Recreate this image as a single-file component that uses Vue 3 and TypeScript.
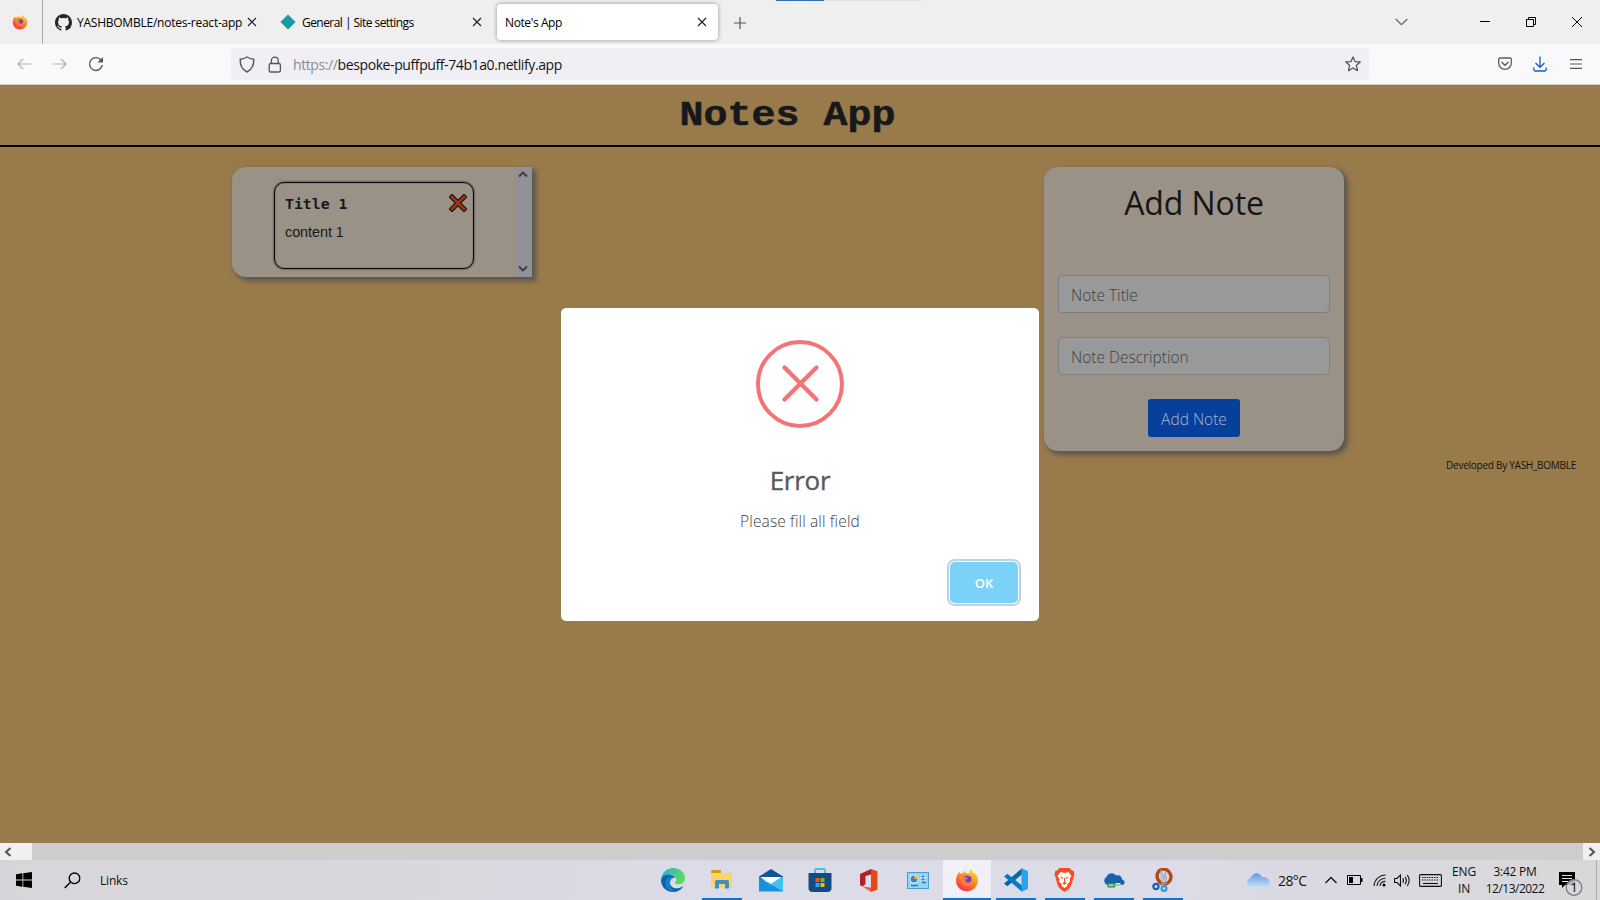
<script setup lang="ts">
interface TaskApp {
  name: string
  open: boolean
  active?: boolean
}

const apps: TaskApp[] = [
  { name: 'edge', open: false },
  { name: 'files', open: true },
  { name: 'mail', open: false },
  { name: 'store', open: false },
  { name: 'office', open: false },
  { name: 'panel', open: false },
  { name: 'firefox', open: true, active: true },
  { name: 'code', open: true },
  { name: 'brave', open: true },
  { name: 'cloud', open: true },
  { name: 'snip', open: true },
]

const notes = [{ title: 'Title 1', content: 'content 1' }]
</script>

<template>
  <div class="screen">
    <svg class="defs" width="0" height="0">
      <defs>
        <linearGradient id="ffA" x1="0.8" y1="0" x2="0.2" y2="1">
          <stop offset="0" stop-color="#ffe83d" />
          <stop offset="0.45" stop-color="#ff8a1f" />
          <stop offset="1" stop-color="#f5274f" />
        </linearGradient>
        <linearGradient id="edgeA" x1="0" y1="0" x2="1" y2="0.3">
          <stop offset="0" stop-color="#2aa7e0" />
          <stop offset="1" stop-color="#5bdc5f" />
        </linearGradient>
        <linearGradient id="cloudA" x1="0" y1="0" x2="0" y2="1">
          <stop offset="0" stop-color="#5f9be8" />
          <stop offset="1" stop-color="#c9dff8" />
        </linearGradient>
        <symbol id="firefox" viewBox="0 0 24 24">
          <path d="M3.2 5.5C3.6 4.8 4 4.300 4.600 3.800 4.700 4.800 5 5.300 5.400 5.700 6.300 5.200 7 5.100 8 5.200 8.500 4.200 9.300 3.400 10.500 3 10.300 4 10.600 4.600 11.300 5.200L14.500 5C14.300 3.400 14.800 2 16 .8 16.500 3.400 18.300 4.300 19.600 6.100 19.600 5.500 19.500 5 19.300 4.500 21.800 6.500 23.200 9.500 23 12.800 22.700 19 17.900 23.200 12 23.200 5.800 23.200 1 18.600 1 12.500 1 9.900 1.700 7.400 3.200 5.500Z" fill="url(#ffA)" />
          <path d="M7.500 12C7.500 9 9.600 7.300 12.300 7.500 15.500 7.700 17.200 9.900 17 12.500 16.800 15.300 14.800 16.900 12.200 16.900 9.500 16.900 7.500 14.900 7.500 12Z" fill="#8a45d8" />
          <path d="M4.500 8.500C7 7.500 9 8.300 9.800 9.300L12.700 9.600C12.500 11 11 11 10.600 11.500 10.600 13 11.800 13.900 13.400 13.500 15.800 13 15.400 10.400 14 9.200 17 10 18 12.400 17.300 14.800 16.400 18 13 19 10 17.800 6.500 16.400 5 12.500 4.500 8.500Z" fill="#ff8a2a" opacity=".8" />
          <path d="M12.500 8.200C15.500 8.500 16.600 10.500 16 12.500 15 15 11.500 15 10.300 12.500 12 13 13.500 12 12.500 8.200Z" fill="#6a3cc8" />
        </symbol>
        <symbol id="close" viewBox="0 0 10 10">
          <path d="M1 1 9 9M9 1 1 9" fill="none" stroke="#222" stroke-width="1.200" />
        </symbol>
      </defs>
    </svg>

    <header class="tabs">
      <div class="pinned"><svg width="16" height="16"><use href="#firefox" /></svg></div>
      <div class="tab tab-a">
        <svg class="fav" width="17" height="17" viewBox="0 0 16 16">
          <path fill="#24292f" fill-rule="evenodd" d="M8 0C3.580 0 0 3.580 0 8c0 3.540 2.290 6.530 5.470 7.590.4.070.55-.17.55-.38 0-.19-.01-.82-.01-1.490-2.010.37-2.530-.49-2.690-.94-.09-.23-.48-.94-.82-1.130-.28-.15-.68-.52-.01-.53.63-.01 1.080.58 1.230.82.72 1.210 1.870.87 2.330.66.070-.52.28-.87.51-1.070-1.780-.2-3.640-.89-3.640-3.950 0-.87.31-1.590.82-2.150-.08-.2-.36-1.020.08-2.120 0 0 .67-.21 2.200.82.64-.18 1.320-.27 2-.27s1.360.09 2 .27c1.530-1.040 2.200-.82 2.200-.82.44 1.100.16 1.920.08 2.120.51.56.82 1.270.82 2.150 0 3.070-1.870 3.750-3.650 3.950.29.25.54.73.54 1.480 0 1.070-.01 1.930-.01 2.200 0 .21.15.46.55.38A8.010 8.010 0 0 0 16 8c0-4.420-3.580-8-8-8Z" />
        </svg>
        <span class="t1">YASHBOMBLE/notes-react-app</span>
        <svg class="x" width="10" height="10"><use href="#close" /></svg>
      </div>
      <div class="tab tab-b">
        <svg class="fav" width="16" height="16" viewBox="0 0 16 16"><path d="M8 .4 15.600 8 8 15.600.4 8Z" fill="#159ba3" /></svg>
        <span class="t2">General | Site settings</span>
        <svg class="x" width="10" height="10"><use href="#close" /></svg>
      </div>
      <div class="tab tab-c">
        <span class="t3">Note's App</span>
        <svg class="x" width="10" height="10"><use href="#close" /></svg>
      </div>
      <svg class="plus" width="12" height="12" viewBox="0 0 12 12"><path d="M6 0V12M0 6H12" stroke="#555" stroke-width="1.200" /></svg>
      <div class="win">
        <svg width="13" height="8" viewBox="0 0 13 8"><path d="M.7 1 6.500 6.700 12.300 1" fill="none" stroke="#666" stroke-width="1.300" /></svg>
        <svg class="min" width="10" height="2"><path d="M0 .5H10" stroke="#000" /></svg>
        <svg class="max" width="10" height="10" viewBox="0 0 10 10"><path d="M.5 2.500H7.500V9.500H.5ZM2.500 2.500V.5H9.500V7.500H7.500" fill="none" stroke="#000" /></svg>
        <svg width="10" height="10" viewBox="0 0 10 10"><path d="M0 0 10 10M10 0 0 10" stroke="#000" stroke-width="1" /></svg>
      </div>
      <i class="drag-line"></i><i class="drag-mark"></i>
    </header>

    <nav class="toolbar">
      <svg class="back" width="14" height="12" viewBox="0 0 14 12"><path d="M14 6H1M6 1 1 6 6 11" fill="none" stroke="#b4b4b8" stroke-width="1.200" /></svg>
      <svg class="fwd" width="14" height="12" viewBox="0 0 14 12"><path d="M0 6H13M8 1 13 6 8 11" fill="none" stroke="#b4b4b8" stroke-width="1.200" /></svg>
      <svg class="reload" width="16" height="16" viewBox="0 0 16 16"><path d="M13.300 4.500A6.400 6.400 0 1 0 14.300 9" fill="none" stroke="#55555c" stroke-width="1.400" /><path d="M15 1V6.500H9.500Z" fill="#55555c" /></svg>
      <div class="url">
        <svg class="shield" width="16" height="17" viewBox="0 0 16 17"><path d="M8 1C10 2.300 12.500 3 14.800 3.300 15 9 13 13.500 8 16 3 13.500 1 9 1.200 3.300 3.500 3 6 2.300 8 1Z" fill="none" stroke="#55555c" stroke-width="1.400" stroke-linejoin="round" /></svg>
        <svg class="lock" width="14" height="17" viewBox="0 0 14 17"><rect x="1.200" y="7.500" width="11.200" height="8.500" rx="1.500" fill="none" stroke="#55555c" stroke-width="1.300" /><path d="M3.400 7.500V4.500a3.400 3.400 0 0 1 6.800 0v3" fill="none" stroke="#55555c" stroke-width="1.300" /></svg>
        <span class="addr"><span class="scheme">https://</span>bespoke-puffpuff-74b1a0.netlify.app</span>
        <svg class="star" width="16" height="16" viewBox="0 0 16 16"><path d="M8 1 10 5.600 15.200 6 11.300 9.400 12.500 14.700 8 12 3.500 14.700 4.700 9.400.8 6 6 5.600Z" fill="none" stroke="#55555c" stroke-width="1.300" stroke-linejoin="round" /></svg>
      </div>
      <div class="tools">
        <svg width="14" height="14" viewBox="0 0 14 14"><path d="M2 1H12a1.300 1.300 0 0 1 1.300 1.300V6A6.300 6.300 0 0 1 .7 6V2.300A1.300 1.300 0 0 1 2 1ZM3.800 5.200 7 8.300l3.200-3.100" fill="none" stroke="#5b5b62" stroke-width="1.300" stroke-linecap="round" /></svg>
        <svg class="down" width="14" height="16" viewBox="0 0 14 16"><path d="M7 .5V11M2.500 7 7 11.300 11.500 7M.8 11.500V13.500a1.500 1.500 0 0 0 1.500 1.500H11.700a1.500 1.500 0 0 0 1.500-1.500V11.500" fill="none" stroke="#0b5fd8" stroke-width="1.300" /></svg>
        <svg width="12" height="10" viewBox="0 0 12 10"><path d="M0 .7H12M0 5H12M0 9.300H12" stroke="#55555c" stroke-width="1.200" /></svg>
      </div>
    </nav>

    <main class="page">
      <h1><span>Notes App</span></h1>
      <div class="columns">
        <section class="list">
          <div class="list-body">
            <article v-for="note in notes" :key="note.title" class="note">
              <div class="note-head">
                <b>{{ note.title }}</b>
                <svg width="18" height="18" viewBox="0 0 18 18"><path d="M3 3 15 15M15 3 3 15" stroke="#1c0e0a" stroke-width="5" stroke-linecap="square" stroke-linejoin="round" /><path d="M3 3 15 15M15 3 3 15" stroke="#9c3018" stroke-width="3" stroke-linecap="square" /></svg>
              </div>
              <p>{{ note.content }}</p>
            </article>
          </div>
          <div class="vbar">
            <svg width="10" height="7" viewBox="0 0 10 7"><path d="M1 5.500 5 1.500 9 5.500" fill="none" stroke="#383a3e" stroke-width="1.800" /></svg>
            <svg width="10" height="7" viewBox="0 0 10 7"><path d="M1 1.500 5 5.500 9 1.500" fill="none" stroke="#383a3e" stroke-width="1.800" /></svg>
          </div>
        </section>
        <section class="form">
          <h2>Add Note</h2>
          <div class="field"><span class="f1">Note Title</span></div>
          <div class="field"><span class="f2">Note Description</span></div>
          <button type="button">Add Note</button>
        </section>
      </div>
      <footer><span>Developed By YASH_BOMBLE</span></footer>

      <div class="modal" role="dialog">
        <svg class="err" width="88" height="88" viewBox="0 0 88 88"><circle cx="44" cy="44" r="42" fill="none" stroke="#f27474" stroke-width="4" /><path d="M28.500 27.500 60.500 59.500M60.500 27.500 28.500 59.500" stroke="#f27474" stroke-width="4.400" stroke-linecap="round" /></svg>
        <div class="modal-title"><span>Error</span></div>
        <div class="modal-text"><span>Please fill all field</span></div>
        <div class="modal-foot"><button type="button"><span>OK</span></button></div>
      </div>
    </main>

    <div class="hbar">
      <div class="hleft"><svg width="8" height="10" viewBox="0 0 8 10"><path d="M6.500 1 2 5 6.500 9" fill="none" stroke="#505050" stroke-width="2" /></svg></div>
      <div class="hright"><svg width="8" height="10" viewBox="0 0 8 10"><path d="M1.500 1 6 5 1.500 9" fill="none" stroke="#505050" stroke-width="2" /></svg></div>
    </div>

    <div class="taskbar">
      <div class="start">
        <svg width="16" height="16" viewBox="0 0 16 16"><path d="M0 2.200 6.500 1.300V7.600H0ZM7.300 1.200 16 0V7.600H7.300ZM0 8.400H6.500V14.700L0 13.800ZM7.300 8.400H16V16L7.300 14.800Z" /></svg>
        <svg class="search" width="17" height="17" viewBox="0 0 17 17"><circle cx="10.500" cy="6.300" r="5.300" fill="none" stroke="#000" stroke-width="1.300" /><path d="M6.500 10.200.7 16" stroke="#000" stroke-width="1.500" /></svg>
        <span>Links</span>
      </div>
      <div class="apps">
        <div v-for="app in apps" :key="app.name" class="app" :class="{ open: app.open, active: app.active }">
          <svg v-if="app.name === 'edge'" width="24" height="24" viewBox="0 0 24 24"><path d="M0 12C.5 5 5.500 0 12 0c7 0 12 4.500 12 10 0 4-3 6.300-6.300 6.300-2.200 0-3.700-.8-3.700-1.600 0-.8 1.300-1.200 1.300-3.200C15.300 8.500 12.500 7 9 7 4.500 7 1 9 0 12Z" fill="url(#edgeA)" /><path d="M0 12C1 8 5 6.300 9 7c3.500.5 5 2 5.800 3.200C12 8.800 8.500 11.500 9 15c.5 5 7 7.500 13.500 3C20 22 16.500 24 12 24 5 24 0 18.500 0 12Z" fill="#0c62b5" /><path d="M9 15c-.4 4 2 7.500 6 8.600C7 24 2.500 17 5 12 7 9 10 8 12.500 9.300 10 10 9 12 9 15Z" fill="#1480cf" /></svg>
          <svg v-else-if="app.name === 'files'" width="22" height="20" viewBox="0 0 22 20"><path d="M0 1H10V3H21V18H0Z" fill="#fcd462" /><path d="M0 1.500a1.500 1.500 0 0 1 1.500-1.500H9a1 1 0 0 1 1 1V3H0Z" fill="#d59a1d" /><path d="M4 18.500V11.500A1.500 1.500 0 0 1 5.500 10H16.500A1.500 1.500 0 0 1 18 11.500V18.500H14V14H8V18.500Z" fill="#3f8ec9" /></svg>
          <svg v-else-if="app.name === 'mail'" width="24" height="23" viewBox="0 0 24 23"><path d="M12 0 24 7.500V12H0V7.500Z" fill="#11539c" /><path d="M2 8H22L12 18Z" fill="#fff" /><path d="M0 8 12 15.500 24 8V22.500H0Z" fill="#1a8fdc" /><path d="M1.500 8H22.500L12 15.300Z" fill="#fff" /><path d="M24 8V22.500L8 13Z" fill="#41c3f2" /><path d="M1.500 8H22.500L12 14.800Z" fill="#fff" /></svg>
          <svg v-else-if="app.name === 'store'" width="24" height="24" viewBox="0 0 24 24"><path d="M7 6V2.500A1.500 1.500 0 0 1 8.500 1H15.500A1.500 1.500 0 0 1 17 2.500V6" fill="none" stroke="#42c1ee" stroke-width="2" /><path d="M.5 5H23.500V20a4 4 0 0 1-4 4H4.500a4 4 0 0 1-4-4Z" fill="#164a82" /><path d="M7.500 10h4v4h-4Z" fill="#f25022" /><path d="M12.500 10h4v4h-4Z" fill="#7fba00" /><path d="M7.500 15h4v4h-4Z" fill="#2ea9ea" /><path d="M12.500 15h4v4h-4Z" fill="#ffb900" /></svg>
          <svg v-else-if="app.name === 'office'" width="20" height="23" viewBox="0 0 20 23"><path d="M12 0 18.500 2.200V20.800L12 23Z" fill="#e64a19" /><path d="M12 0V5.500L6.500 7V15L3.500 17.500 1 16V5Z" fill="#b51f27" /><path d="M3.500 17.500 12 18.500V23Z" fill="#e8604d" /></svg>
          <svg v-else-if="app.name === 'panel'" width="22" height="17" viewBox="0 0 22 17"><rect x=".5" y=".5" width="21" height="16" fill="#8fd4f3" stroke="#4d9ec8" /><circle cx="7" cy="7" r="4.500" fill="#e7f7fd" /><circle cx="7" cy="7" r="3.500" fill="#2a86cc" /><path d="M7 7V3.500A3.500 3.500 0 0 1 10.500 7Z" fill="#ffa733" /><path d="M13 4.500H19M13 7.500H19M13 10.500H19M4 13.500H11" stroke="#2d79a8" stroke-width="1.300" /><path d="M14 3V12M18 3V9" stroke="#fff" /></svg>
          <svg v-else-if="app.name === 'firefox'" width="24" height="24"><use href="#firefox" /></svg>
          <svg v-else-if="app.name === 'code'" width="24" height="24" viewBox="0 0 24 24"><path d="M18 .3V6.500L3.300 18.300 0 15.500Z" fill="#0b65a9" /><path d="M0 8.500 3.300 5.700 18 17.500V23.700Z" fill="#087abf" /><path d="M17.500.2 24 3V21L17.500 23.800Z" fill="#29a3ef" /></svg>
          <svg v-else-if="app.name === 'brave'" width="21" height="24" viewBox="0 0 21 24"><path d="M5.500 0H15.500L18 2.500 19.800 3 20.500 7 19.500 9C18 16 17 19 14 21.500L10.500 24 7 21.500C4 19 3 16 1.500 9L.5 7 1.200 3 3 2.500Z" fill="#fb4b1f" /><path d="M6.500 4 10.500 5 14.500 4 17.500 8 15.500 11 16 13.500 13 16.500 13.500 18 10.500 20 7.500 18 8 16.500 5 13.500 5.500 11 3.500 8Z" fill="#fff" /><path d="M6 8.500 9.300 9.500 8.500 11ZM15 8.500 11.700 9.500 12.500 11ZM10 10h1v4l1.800 1.200L10.500 16.800 8.200 15.200 10 14Z" fill="#fb4b1f" /></svg>
          <svg v-else-if="app.name === 'cloud'" width="22" height="17" viewBox="0 0 22 17"><path d="M4.500 13A4.300 4.300 0 0 1 3.500 5C5 1 10 .0 13 3.500 17 2.500 19 5 19 7.500 23 8.500 22 13 19 13Z" fill="#1763ab" /><rect x="4.500" y="11" width="8" height="4.500" fill="#34944c" /><rect x="12.500" y="11" width="5" height="4.500" fill="#dfe9e2" /><path d="M6 13.200H11" stroke="#dff3e2" stroke-width="1.400" stroke-dasharray="1.500 .6" /><path d="M13.300 13.200H16.800" stroke="#34944c" stroke-width="1.200" stroke-dasharray="1.200 .6" /></svg>
          <svg v-else width="22" height="24" viewBox="0 0 22 24"><ellipse cx="12" cy="8.500" rx="6.800" ry="7.600" fill="none" stroke="#b8441b" stroke-width="3.400" transform="rotate(-20 12 8.500)" /><path d="M8.500 1 14.500 16 9.500 15ZM13.500 3 9.500 18 15 14Z" fill="#c8ccd2" stroke="#8d939b" stroke-width=".6" /><circle cx="4" cy="18.500" r="2.600" fill="none" stroke="#1b63b2" stroke-width="2.200" /><circle cx="12" cy="20.500" r="2.400" fill="none" stroke="#2f9ade" stroke-width="2.200" /></svg>
        </div>
      </div>
      <div class="tray">
        <svg class="weather" width="24" height="16" viewBox="0 0 24 16"><path d="M5 15.500A4.600 4.600 0 0 1 4.500 6.500C6 .5 14 -1 16 5.200 21 4.500 24 8 23.500 11.500 23 14.500 21 15.500 19 15.500Z" fill="url(#cloudA)" /></svg>
        <span class="temp">28°C</span>
        <svg class="caret" width="12" height="8" viewBox="0 0 12 8"><path d="M.5 7 6 1.500 11.500 7" fill="none" stroke="#111" stroke-width="1.300" /></svg>
        <svg class="batt" width="16" height="10" viewBox="0 0 16 10"><path d="M.5.500H13.500V9.500H.5Z" fill="none" stroke="#000" /><path d="M2 2H6V8H2ZM14 3h1.500V7H14Z" /></svg>
        <svg class="wifi" width="14" height="13" viewBox="0 0 14 13"><path d="M1 12A11.500 11.500 0 0 1 12.500 1M4 12A8.500 8.500 0 0 1 12.500 4.200M7 12A5.500 5.500 0 0 1 12.500 7.400" fill="none" stroke="#222" stroke-width="1.100" /><circle cx="11" cy="11" r="1.500" /></svg>
        <svg class="vol" width="17" height="13" viewBox="0 0 17 13"><path d="M.6 4.500H3L6.500 1V12L3 8.500H.6ZM8.700 4.300Q10.200 6.500 8.700 8.700M11 2.700Q13.600 6.500 11 10.300M13.300 1Q17 6.500 13.300 12" fill="none" stroke="#111" stroke-width="1.100" /></svg>
        <svg class="keys" width="23" height="13" viewBox="0 0 23 13"><rect x=".6" y=".6" width="21.800" height="11.800" rx="1" fill="none" stroke="#111" stroke-width="1.100" /><path d="M3 3.500H20M3 6H20" stroke="#111" stroke-width="1.200" stroke-dasharray="1.400 1" /><path d="M4 9.500H19" stroke="#111" stroke-width="1.100" /></svg>
        <div class="lang"><span>ENG</span><span>IN</span></div>
        <div class="clock"><span class="time">3:42 PM</span><span class="date">12/13/2022</span></div>
        <svg class="notif" width="26" height="26" viewBox="0 0 26 26"><path d="M1 1H17V14H7L4 17V14H1Z" /><path d="M4 4.500H14M4 7.500H14M4 10.500H10" stroke="#e2e2e6" stroke-width="1.200" /><circle cx="16" cy="16.500" r="7.800" fill="#d6d6da" fill-opacity=".82" stroke="#76767a" stroke-width="1.200" /><text x="16" y="21" text-anchor="middle" font-size="12.500">1</text></svg>
        <i class="peek"></i>
      </div>
    </div>
  </div>
</template>

<style>
html, body { margin: 0; overflow: hidden; }
</style>

<style scoped>
* { box-sizing: border-box; }
.screen { position: relative; width: 1600px; height: 900px; display: flex; flex-direction: column; overflow: hidden; font-family: "Open Sans", "Noto Sans", sans-serif; color: #111; }
svg { display: block; flex: none; }
span { white-space: nowrap; }
.defs { position: absolute; }

.tabs { position: relative; flex: none; height: 44px; background: #efefef; display: flex; align-items: center; font-size: 12px; color: #000; }
.pinned { width: 43px; height: 44px; border-right: 1px solid #aaa; padding: 14px 0 0 12px; }
.tab { display: flex; align-items: center; height: 36px; }
.tab .x { margin-left: auto; }
.tab-a { width: 214px; padding-left: 12px; }
.tab-a .fav { margin-right: 5px; }
.tab-b { width: 202px; margin-left: 23px; padding-left: 0; }
.tab-b .fav { margin-right: 6px; }
.tab-c { width: 221px; margin-left: 15px; padding: 0 11px 0 8px; background: #fff; border-radius: 4px; box-shadow: 0 0 4px rgba(0, 0, 0, .4); }
.t1 { letter-spacing: -.24px; }
.t2 { letter-spacing: -.55px; }
.t3 { letter-spacing: -.4px; }
.plus { margin-left: 16px; margin-top: 1px; }
.win { margin-left: auto; display: flex; align-items: center; padding-right: 18px; }
.min { margin-left: 72px; }
.max { margin: 0 36px; }
.drag-line { position: absolute; left: 824px; top: 0; width: 98px; height: 1px; background: #e0e0e0; }
.drag-mark { position: absolute; left: 776px; top: 0; width: 48px; height: 1px; background: #2f6fae; }

.toolbar { flex: none; height: 41px; background: #f9f9fb; border-bottom: 1px solid #cfccc8; display: flex; align-items: center; padding-left: 17px; }
.fwd { margin-left: 22px; }
.reload { margin-left: 21px; }
.url { width: 1138px; height: 32px; margin-left: 127px; border-radius: 4px; background: #f0eff4; display: flex; align-items: center; padding: 0 8px 0 8px; }
.lock { margin-left: 13px; }
.addr { margin: 1px 0 0 11px; font-size: 14px; letter-spacing: -.4px; color: #15141a; }
.scheme { color: #8b8b90; }
.star { margin-left: auto; }
.tools { flex: 1; display: flex; align-items: center; justify-content: flex-end; padding-right: 18px; gap: 21px; }
.tools svg:last-child { margin-left: 2px; }

.page { position: relative; flex: none; height: 758px; background: #997a4b; }
h1 { margin: 0; height: 62px; border-bottom: 2px solid #000; padding-right: 25px; text-align: center; font: 700 40px/60px "Liberation Mono", monospace; color: #17181a; -webkit-text-stroke: .6px #17181a; }
h1 span { display: inline-block; transform: scaleY(.86); transform-origin: 50% 41px; }
.columns { display: flex; justify-content: space-between; align-items: flex-start; margin: 20px 256px 0 232px; }
.list, .form { width: 300px; background: #9a9287; box-shadow: 3px 3px 5px 1px #5c5550; }
.list { height: 110px; border-radius: 14px 0 0 14px; display: flex; }
.list-body { flex: 1; padding: 15px 0 0 42px; }
.note { width: 200px; height: 87px; border: 1px solid #0c0c0c; border-radius: 10px; box-shadow: 0 0 2px #111, inset 0 0 1px #111; padding: 11px 6px 0 10px; color: #171817; }
.note-head { display: flex; justify-content: space-between; align-items: center; height: 18px; }
.note b { font: 700 14.800px/18px "DejaVu Sans Mono", monospace; padding-top: 1px; }
.note p { margin: 11px 0 0; font: 14.500px/18px "Liberation Sans", Arial, sans-serif; letter-spacing: -.1px; }
.vbar { width: 17px; background: #909298; display: flex; flex-direction: column; justify-content: space-between; align-items: center; padding: 4px 1px 5px 0; }
.form { height: 284px; border-radius: 14px; padding: 0 14px; display: flex; flex-direction: column; align-items: center; }
h2 { margin: 13px 0 55px; height: 40px; font-size: 32px; line-height: 46px; font-weight: 400; color: #151515; white-space: nowrap; letter-spacing: -.1px; }
.field { width: 272px; height: 38px; margin-bottom: 24px; border: 1px solid #7c7f82; border-radius: 4px; background: #999; padding-left: 12px; font-size: 15.500px; line-height: 39px; font-weight: 300; color: #3c4044; }
.form button { width: 92px; height: 38px; padding: 2px 0 0; border: 0; border-radius: 3px; background: #06409b; color: #a9b6cc; font: 300 15.500px "Open Sans", sans-serif; }
footer { display: flex; justify-content: flex-end; padding-right: 24px; margin-top: 6px; font-size: 10px; line-height: 16px; letter-spacing: -.26px; color: #141210; }

.modal { position: absolute; left: 561px; top: 223px; width: 478px; height: 313px; border-radius: 5px; background: #fff; display: flex; flex-direction: column; align-items: center; padding-top: 32px; }
.modal-title { margin-top: 32px; height: 40px; font-size: 26px; line-height: 40px; letter-spacing: -.25px; color: #595959; -webkit-text-stroke: .4px #595959; }
.modal-text { margin-top: 9px; height: 24px; font-size: 15.500px; line-height: 24px; letter-spacing: .14px; font-weight: 300; color: #444; }
.modal-foot { width: 100%; display: flex; justify-content: flex-end; margin-top: 29px; padding-right: 21px; }
.modal-foot button { width: 68px; height: 41px; padding: 0; border: 0; border-radius: 5px; background: #7cd1f9; color: #fff; font: 600 13px "Open Sans", sans-serif; box-shadow: 0 0 0 1px #fff, 0 0 0 3px #bcd3e3; }

.hbar { flex: none; height: 17px; background: #cdcdcd; display: flex; justify-content: space-between; }
.hleft, .hright { height: 17px; background: #f0f0f0; display: flex; align-items: center; }
.hleft { width: 32px; padding-left: 4px; }
.hright { width: 17px; padding-left: 5px; }

.taskbar { flex: none; height: 40px; background: linear-gradient(90deg, #d6d6da 0, #d9d8df 30%, #dcdce9 45%, #dcdce9 72%, #dad9e2 80%, #d8d8da); display: flex; align-items: center; }
.start { width: 649px; display: flex; align-items: center; padding-left: 16px; font-size: 12px; letter-spacing: -.2px; }
.search { margin: 0 19px 0 32px; }
.apps { display: flex; height: 40px; }
.app { width: 49px; height: 40px; display: flex; align-items: center; justify-content: center; position: relative; padding-right: 2px; }
.app.open::after { content: ""; position: absolute; left: 4px; right: 5px; bottom: 0; height: 2px; background: #0f74cf; }
.app.active { background: linear-gradient(90deg, #f0f0f6 48px, transparent 48px); }
.app.active::after { left: 0; right: 1px; }
.tray { flex: 1; display: flex; align-items: center; padding-left: 58px; font-size: 12px; height: 40px; }
.temp { width: 29px; margin-left: 8px; font-size: 14px; letter-spacing: -.6px; }
.caret { margin-left: 18px; }
.batt { margin-left: 10px; }
.wifi { margin-left: 10px; }
.vol { margin-left: 7px; }
.keys { margin-left: 8px; }
.lang, .clock { display: flex; flex-direction: column; align-items: center; line-height: 17px; }
.lang { width: 26px; margin-left: 9px; letter-spacing: -.2px; }
.clock { width: 60px; margin-left: 8px; }
.time { letter-spacing: -.25px; }
.date { letter-spacing: -.52px; }
.notif { margin-left: 13px; margin-top: 8px; }
.peek { width: 1px; height: 40px; margin-left: 12px; background: #aaaaae; }
</style>
